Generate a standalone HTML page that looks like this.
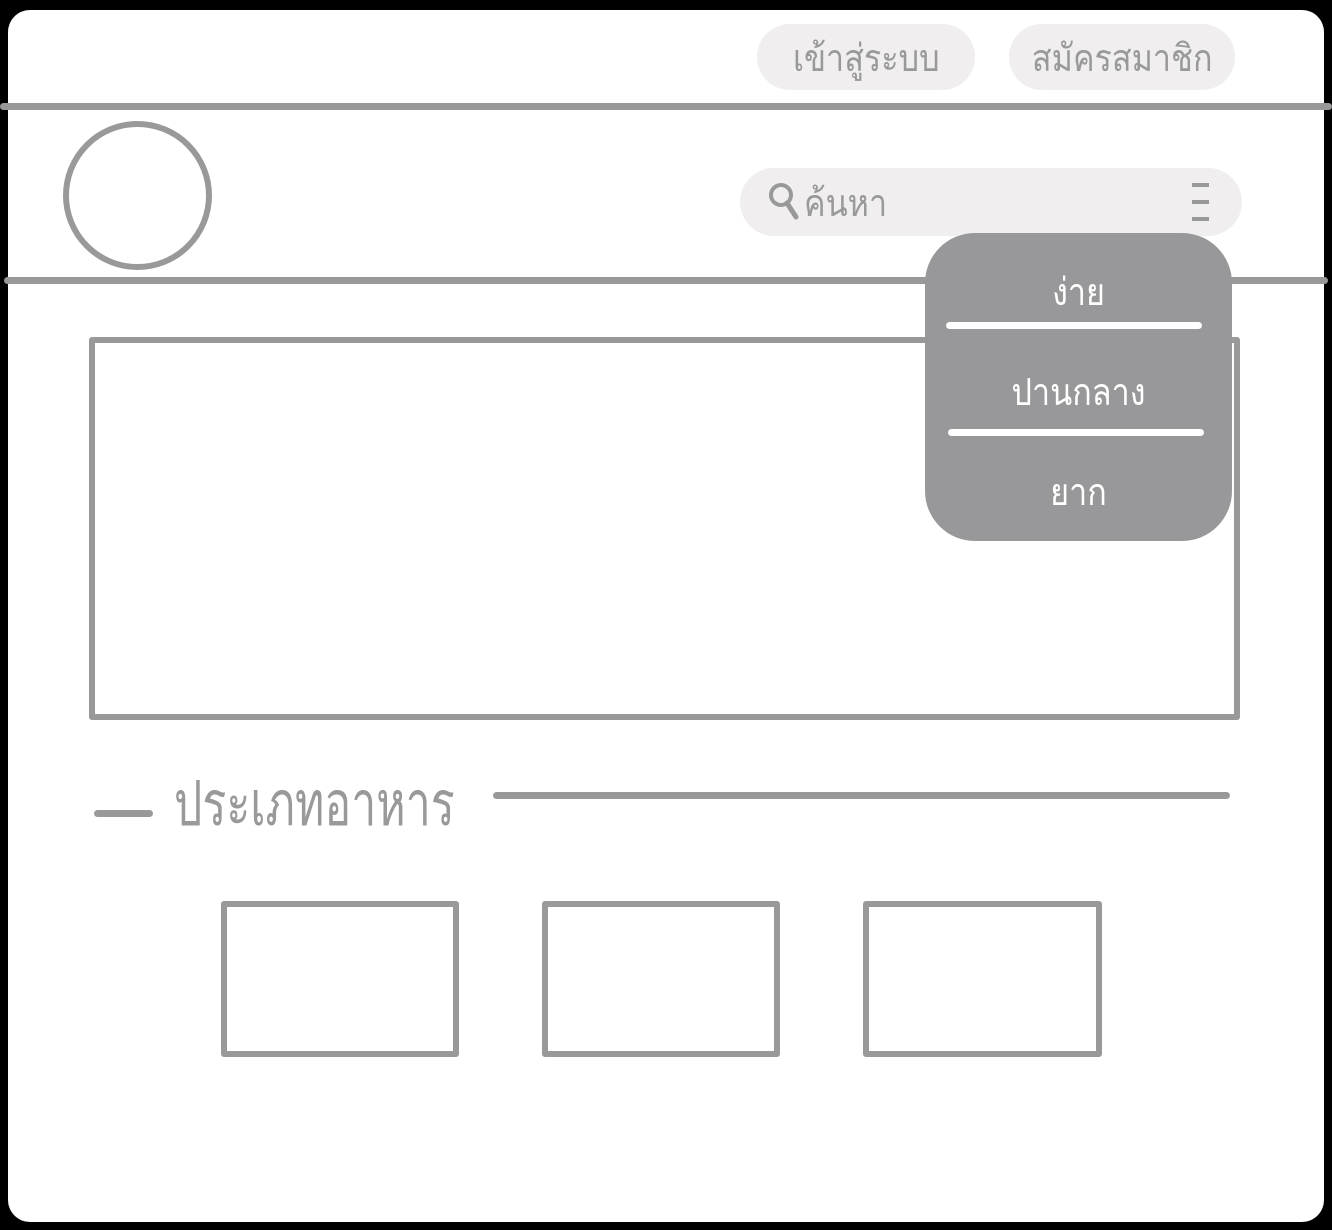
<!DOCTYPE html>
<html><head><meta charset="utf-8"><style>
*{margin:0;padding:0;box-sizing:border-box}
body{width:1332px;height:1230px;background:#000;position:relative;overflow:hidden;font-family:"Liberation Sans","DejaVu Sans",sans-serif}
.page{position:absolute;left:8px;top:10px;width:1316px;height:1212px;background:#fff;border-radius:22px}
.a{position:absolute}
.hl{position:absolute;height:7px;background:#999;border-radius:4px}
.pill{position:absolute;background:#f0eeee;border-radius:34px;color:#999;font-size:38px;display:flex;align-items:center;justify-content:center}
.pill span.c{display:inline-block;transform:scaleX(0.85)}
.box{position:absolute;border:6px solid #999;border-radius:3px}
.dd{position:absolute;left:925px;top:233px;width:307px;height:308px;background:#989799;border-radius:50px}
.dd .t{position:absolute;left:0;width:100%;text-align:center;color:#fff;font-size:38px;transform:scaleX(0.85)}
.dd .s{position:absolute;height:7px;background:#fff;border-radius:4px}
</style></head><body>
<div class="page"></div>
<div class="pill" style="left:757px;top:24px;width:218px;height:66px"><span class="c">เข้าสู่ระบบ</span></div>
<div class="pill" style="left:1009px;top:24px;width:226px;height:66px"><span class="c">สมัครสมาชิก</span></div>
<div class="hl" style="left:0;top:103px;width:1332px"></div>
<div class="a" style="left:63px;top:121px;width:149px;height:149px;border:6px solid #999;border-radius:50%"></div>
<div class="pill" style="left:740px;top:168px;width:502px;height:68px;justify-content:flex-start;padding-left:28px">
<svg width="32" height="40" viewBox="0 0 32 40"><circle cx="13" cy="13" r="10" fill="none" stroke="#999" stroke-width="4"/><path d="M19 21 L28 35" stroke="#999" stroke-width="5" stroke-linecap="round"/></svg>
<span class="c" style="margin-left:4px;transform-origin:left">ค้นหา</span></div>
<div class="a" style="left:1192px;top:183px;width:17px;height:4px;background:#999"></div>
<div class="a" style="left:1192px;top:200px;width:17px;height:4px;background:#999"></div>
<div class="a" style="left:1192px;top:217px;width:17px;height:4px;background:#999"></div>
<div class="hl" style="left:4px;top:277px;width:1324px"></div>
<div class="box" style="left:89px;top:337px;width:1151px;height:383px"></div>
<div class="dd">
<div class="t" style="top:262px;top:28px">ง่าย</div>
<div class="s" style="left:21px;top:89px;width:256px"></div>
<div class="t" style="top:128px">ปานกลาง</div>
<div class="s" style="left:23px;top:196px;width:256px"></div>
<div class="t" style="top:228px">ยาก</div>
</div>
<div class="hl" style="left:94px;top:810px;width:59px"></div>
<div class="a" style="left:174px;top:755px;color:#999;font-size:62px;transform:scaleX(0.72);transform-origin:left;white-space:nowrap">ประเภทอาหาร</div>
<div class="hl" style="left:493px;top:792px;width:737px"></div>
<div class="box" style="left:221px;top:901px;width:238px;height:156px"></div>
<div class="box" style="left:542px;top:901px;width:238px;height:156px"></div>
<div class="box" style="left:863px;top:901px;width:239px;height:156px"></div>
</body></html>
